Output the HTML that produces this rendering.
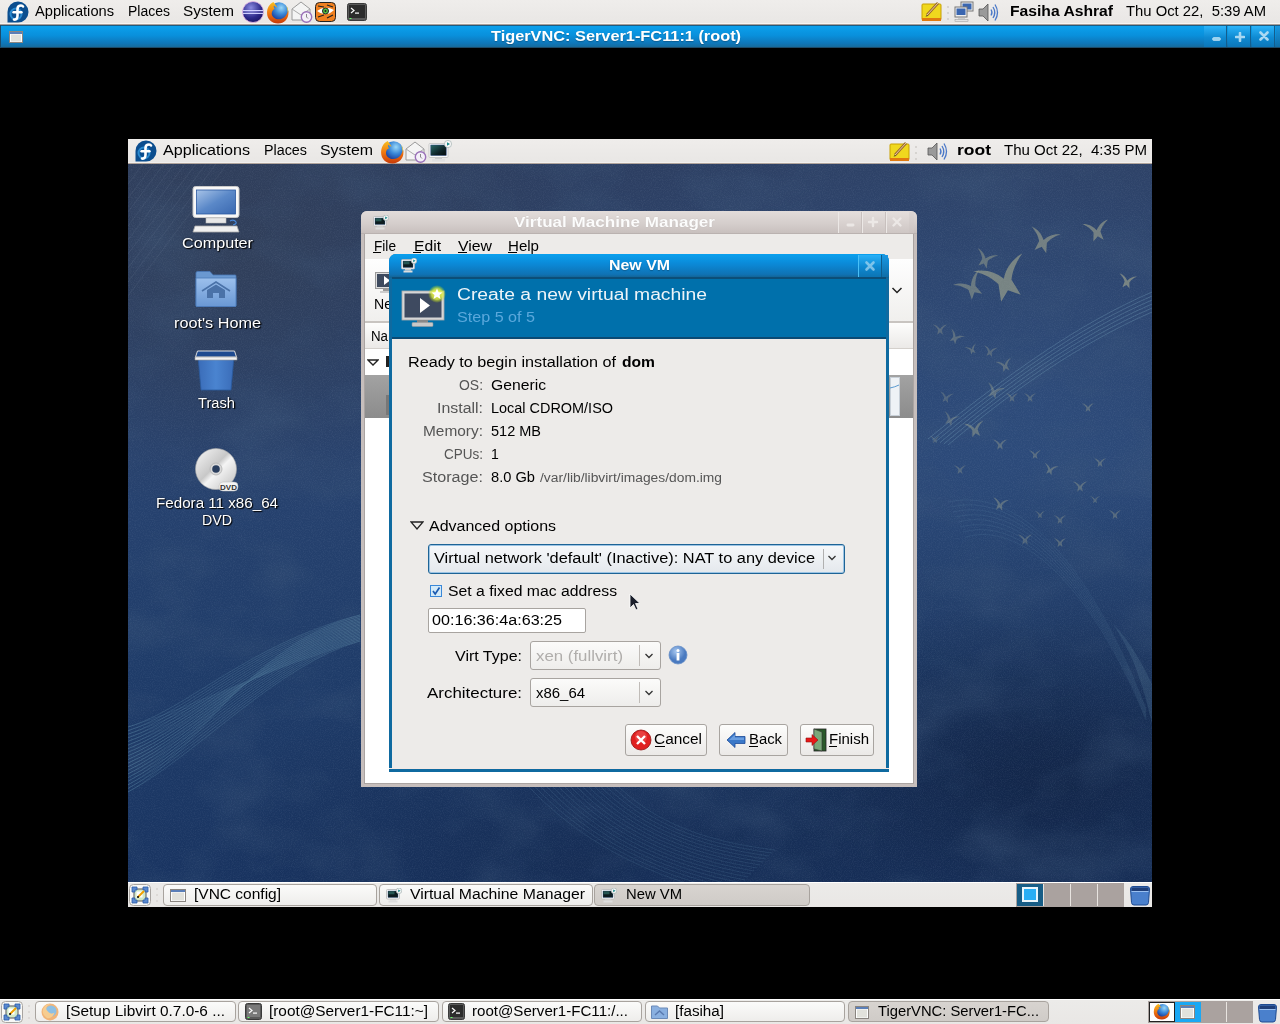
<!DOCTYPE html><html><head><meta charset="utf-8"><style>
html,body{margin:0;padding:0;width:1280px;height:1024px;overflow:hidden;background:#000}
body{position:relative;font-family:"Liberation Sans",sans-serif}
.t{position:absolute;white-space:pre;font-family:"Liberation Sans",sans-serif}
div,svg{box-sizing:border-box}
</style></head><body>
<div style="position:absolute;left:0px;top:0px;width:1280px;height:25px;background:linear-gradient(#efedeb,#e9e7e5 92%,#f6f4f2 92%,#f6f4f2 96%,#a89e98 96%)"></div>
<svg style="position:absolute;left:7px;top:1px;" width="22" height="22" viewBox="0 0 22 22"><g transform="scale(1.0)"><path d="M11 0.5 A10.5 10.5 0 1 1 0.5 11 L0.5 21.5 L11 21.5" fill="none"/>
<path d="M11 0.5a10.5 10.5 0 0 1 0 21H0.5V11A10.5 10.5 0 0 1 11 0.5z" fill="#0b4e8f"/>
<circle cx="9" cy="13" r="5.5" fill="none" stroke="#2a8ad0" stroke-width="2"/>
<path d="M7 18.5 C9.5 19 10.5 17 10.5 14.5 L10.5 8 C10.5 5.5 12 4.5 14 4.5 C15.5 4.5 16 5.5 16 5.5" fill="none" stroke="#fff" stroke-width="2.6" stroke-linecap="round"/>
<path d="M6.5 11.2 H14.5" stroke="#fff" stroke-width="2.4" stroke-linecap="round"/></g></svg>
<div class="t" style="left:35px;top:4px;font-size:14px;line-height:14px;transform:scaleX(1.0465);transform-origin:0 0;color:#000;">Applications</div>
<div class="t" style="left:128px;top:4px;font-size:14px;line-height:14px;transform:scaleX(0.9995);transform-origin:0 0;color:#000;">Places</div>
<div class="t" style="left:183px;top:4px;font-size:14px;line-height:14px;transform:scaleX(1.0927);transform-origin:0 0;color:#000;">System</div>
<svg style="position:absolute;left:242px;top:1px;" width="22" height="22" viewBox="0 0 22 22"><defs><radialGradient id="ecl" cx=".4" cy=".3" r=".8"><stop offset="0" stop-color="#8a8ae0"/><stop offset=".6" stop-color="#2c2a8a"/><stop offset="1" stop-color="#14105a"/></radialGradient></defs><circle cx="11" cy="11" r="10.5" fill="url(#ecl)" stroke="#e8b8e8" stroke-width=".8"/><rect x="1" y="9" width="20" height="1.2" fill="#cfd0ff"/><rect x="1" y="11.8" width="20" height="1.2" fill="#cfd0ff"/></svg>
<svg style="position:absolute;left:266px;top:1px;" width="23" height="23" viewBox="0 0 23 23"><g transform="scale(1.0454545454545454)"><defs><radialGradient id="ffg266" cx=".62" cy=".3" r=".7"><stop offset="0" stop-color="#9ad8f8"/><stop offset=".5" stop-color="#3a88d8"/><stop offset="1" stop-color="#1a3a98"/></radialGradient>
<linearGradient id="ffo266" x1="0" y1="0" x2="0" y2="1"><stop offset="0" stop-color="#f8c020"/><stop offset=".5" stop-color="#f07810"/><stop offset="1" stop-color="#c83a08"/></linearGradient></defs>
<circle cx="12.5" cy="10" r="8.8" fill="url(#ffg266)"/>
<path d="M7 1 C3 3 1 7 1 11.5 C1 17.5 5.5 21.5 11.5 21.5 C17.5 21.5 21.5 17 21.5 11.5 C21.5 10.5 21.3 9.5 21 8.5 C20.5 13 17.5 17.5 12 17.5 C8 17.5 5.2 14.5 5.5 11.5 C5.7 9.5 6.7 8.2 8.3 7.6 C7.5 6.6 7.2 5.5 7.6 4.4 C8.6 5.4 9.6 6 10.8 6.2 C9.8 4.6 8.6 2.8 7 1z" fill="url(#ffo266)"/>
<path d="M19.5 4.5 C21 6.5 21.5 9 21.2 11.5 C20.8 9.5 20.2 7.5 19.5 4.5z" fill="#f8d040"/></g></svg>
<svg style="position:absolute;left:291px;top:1px;" width="22" height="22" viewBox="0 0 22 22"><path d="M1 8 L10 1 L19 8 V19 H1z" fill="#f4f4f4" stroke="#9a9a9a"/><path d="M1 8 L10 14 L19 8" fill="none" stroke="#aaa"/><circle cx="15.5" cy="16" r="5.2" fill="#f4f0f8" stroke="#9a70b8" stroke-width="1.4"/><path d="M15.5 13 V16 L17 17.5" stroke="#888" fill="none"/></svg>
<svg style="position:absolute;left:315px;top:2px;" width="21" height="20" viewBox="0 0 21 20"><rect x="0.5" y="0.5" width="20" height="19" rx="4" fill="#f08020" stroke="#222"/><path d="M2 9 Q10 3 19 8 Q11 16 2 9z" fill="#fff"/><circle cx="10.5" cy="9" r="3" fill="#50c040" stroke="#222"/><circle cx="10.5" cy="9" r="1" fill="#222"/><path d="M3 4 L9 5 M12 3 L18 5 M3 15 L9 13 M12 16 L18 13" stroke="#222" stroke-width="1.2"/></svg>
<svg style="position:absolute;left:347px;top:3px;" width="20" height="18" viewBox="0 0 20 18"><rect x="0.5" y="0.5" width="19" height="17" rx="2" fill="#5a5a5a" stroke="#3a3a3a"/>
<rect x="2" y="2" width="16" height="13" fill="#2c2c2c"/><path d="M4 5 L7 7.5 L4 10" fill="none" stroke="#fff" stroke-width="1.2"/>
<rect x="8" y="9.5" width="4" height="1.2" fill="#fff"/><rect x="2.5" y="15" width="2" height="1" fill="#6f6"/></svg>
<svg style="position:absolute;left:921px;top:1px;" width="21" height="21" viewBox="0 0 21 21"><rect x="1" y="3" width="19" height="16" rx="1" fill="#f0d81e" stroke="#c8a000"/>
<rect x="1" y="17" width="19" height="3" fill="#e07a10"/><path d="M6 14 L17 2" stroke="#9a6a30" stroke-width="2.6"/><path d="M6 14 L17 2" stroke="#e8c8a0" stroke-width="1"/>
<path d="M4.5 15.5 L6 14 L7 15z" fill="#222"/></svg>
<div style="position:absolute;left:947px;top:6px;width:2px;height:2px;background:#cfccc8;border-radius:1px"></div>
<div style="position:absolute;left:947px;top:12px;width:2px;height:2px;background:#cfccc8;border-radius:1px"></div>
<div style="position:absolute;left:947px;top:18px;width:2px;height:2px;background:#cfccc8;border-radius:1px"></div>
<svg style="position:absolute;left:954px;top:1px;" width="22" height="21" viewBox="0 0 22 21"><rect x="7" y="1" width="12" height="9" fill="#f0f0f0" stroke="#777"/><rect x="8.5" y="2.5" width="9" height="6" fill="#3a66b0"/>
<rect x="1" y="6" width="12" height="10" fill="#f0f0f0" stroke="#777"/><rect x="2.5" y="7.5" width="9" height="6.5" fill="#3a66b0"/>
<rect x="4" y="17" width="7" height="1.5" fill="#ccc"/><rect x="1" y="18.5" width="13" height="2" fill="#e4e4e4" stroke="#999" stroke-width=".5"/></svg>
<svg style="position:absolute;left:978px;top:3px;" width="21" height="19" viewBox="0 0 21 19"><path d="M1 6 H5 L10 1 V18 L5 13 H1z" fill="#9a9a9a" stroke="#555" stroke-width=".8"/>
<path d="M13 6.5 Q15 9.5 13 12.5" fill="none" stroke="#4a78c8" stroke-width="1.3"/><path d="M15 4 Q18.5 9.5 15 15" fill="none" stroke="#4a78c8" stroke-width="1.3"/>
<path d="M17 1.5 Q22 9.5 17 17.5" fill="none" stroke="#4a78c8" stroke-width="1.3"/></svg>
<div class="t" style="left:1010px;top:4px;font-size:14px;line-height:14px;font-weight:bold;transform:scaleX(1.1188);transform-origin:0 0;color:#000;">Fasiha Ashraf</div>
<div class="t" style="left:1126px;top:4px;font-size:14px;line-height:14px;transform:scaleX(1.0584);transform-origin:0 0;color:#000;">Thu Oct 22,  5:39 AM</div>
<div style="position:absolute;left:0px;top:25px;width:1280px;height:23px;background:linear-gradient(#1d5a80 0,#1d5a80 4%,#0ba0ec 4%,#0990dc 45%,#0f76b8 80%,#166b9c 96%,#1d4a68 96%)"></div>
<div style="position:absolute;left:0px;top:25px;width:1px;height:23px;background:#1d4a68"></div>
<svg style="position:absolute;left:9px;top:31px;" width="14" height="12" viewBox="0 0 14 12"><rect x="0.5" y="0.5" width="13" height="11" fill="#fff" stroke="#8a8580"/>
<rect x="1" y="1" width="12" height="2" fill="#5b7fb8"/><rect x="2" y="3.5" width="10" height="7" fill="#e2e2dc"/></svg>
<div class="t" style="left:491px;top:29px;font-size:14px;line-height:14px;font-weight:bold;transform:scaleX(1.1658);transform-origin:0 0;color:#fff;text-shadow:0 1px 1px rgba(0,0,0,.25);">TigerVNC: Server1-FC11:1 (root)</div>
<div style="position:absolute;left:1204px;top:26px;width:23px;height:21px;background:linear-gradient(#2cb4fa,#0f8ad2 55%,#0c76b8);border-right:1px solid #145d8c"></div>
<div style="position:absolute;left:1228px;top:26px;width:23px;height:21px;background:linear-gradient(#2cb4fa,#0f8ad2 55%,#0c76b8);border-right:1px solid #145d8c"></div>
<div style="position:absolute;left:1252px;top:26px;width:23px;height:21px;background:linear-gradient(#2cb4fa,#0f8ad2 55%,#0c76b8);border-right:1px solid #145d8c"></div>
<svg style="position:absolute;left:1212px;top:37px;" width="9" height="4" viewBox="0 0 9 4"><rect x="0.5" y="0.5" width="8" height="3" rx="1.5" fill="#9ad4f0" stroke="#cfe8f8" stroke-width=".6"/></svg>
<svg style="position:absolute;left:1235px;top:32px;" width="10" height="10" viewBox="0 0 10 10"><path d="M5 1 V9 M1 5 H9" stroke="#a8d8f2" stroke-width="2.6" stroke-linecap="round"/></svg>
<svg style="position:absolute;left:1259px;top:31px;" width="10" height="10" viewBox="0 0 10 10"><path d="M1.5 1.5 L8.5 8.5 M8.5 1.5 L1.5 8.5" stroke="#a8d8f2" stroke-width="2.6" stroke-linecap="round"/></svg>
<div style="position:absolute;left:1276px;top:26px;width:4px;height:21px;background:linear-gradient(#1896e0,#0f6ea8)"></div>
<div style="position:absolute;left:128px;top:164px;width:1024px;height:718px;background:radial-gradient(ellipse 360px 260px at 110px 90px, rgba(52,62,82,.6), rgba(52,62,82,0)),radial-gradient(ellipse 480px 380px at 900px 240px, rgba(52,88,140,.4), rgba(52,88,140,0)),radial-gradient(ellipse 260px 140px at 900px 580px, rgba(10,25,55,.35), rgba(10,25,55,0)),radial-gradient(ellipse 420px 300px at 930px 620px, rgba(12,24,50,.4), rgba(12,24,50,0)),radial-gradient(ellipse 380px 200px at 450px 700px, rgba(12,24,50,.25), rgba(12,24,50,0)),linear-gradient(180deg,#2d3f62 0%,#284370 40%,#1f3c69 70%,#193461 100%)"></div>
<svg style="position:absolute;left:128px;top:164px;" width="1024" height="718" viewBox="0 0 1024 718"><defs><filter id="grain" x="0" y="0" width="100%" height="100%"><feTurbulence type="fractalNoise" baseFrequency=".9" numOctaves="2" seed="3"/><feColorMatrix values="0 0 0 0 .55  0 0 0 0 .65  0 0 0 0 .8  0 0 0 -1.6 .95"/></filter><filter id="blot" x="0" y="0" width="100%" height="100%"><feTurbulence type="fractalNoise" baseFrequency=".012 .018" numOctaves="3" seed="11"/><feColorMatrix values="0 0 0 0 .05  0 0 0 0 .1  0 0 0 0 .2  0 0 0 -2.2 1.25"/></filter></defs><rect width="1024" height="718" filter="url(#blot)" opacity=".35"/><rect width="1024" height="718" filter="url(#grain)" opacity=".1"/></svg>
<svg style="position:absolute;left:128px;top:164px;" width="1024" height="718" viewBox="0 0 1024 718"><defs><filter id="bblur"><feGaussianBlur stdDeviation=".5"/></filter></defs><g stroke="#8090a8" stroke-width=".6" opacity=".22" fill="none"><path d="M0 20 L15 0"/><path d="M0 34 L26 0"/><path d="M0 48 L36 0"/><path d="M0 62 L46 0"/><path d="M0 76 L57 0"/><path d="M0 90 L68 0"/><path d="M0 104 L78 0"/><path d="M0 118 L88 0"/><path d="M0 132 L99 0"/></g><g fill="none" stroke="#7fb4c8" stroke-width=".55" opacity=".36"><path d="M0.0 563.0 C60.0 545.0 120.0 480.0 232.0 451.0"/><path d="M0.0 566.6 C60.6 547.5 121.7 481.1 232.0 452.4"/><path d="M0.0 570.2 C61.1 550.0 123.3 482.2 232.0 453.9"/><path d="M0.0 573.8 C61.7 552.5 125.0 483.3 232.0 455.3"/><path d="M0.0 577.4 C62.2 555.0 126.7 484.4 232.0 456.8"/><path d="M0.0 581.1 C62.8 557.5 128.3 485.6 232.0 458.2"/><path d="M0.0 584.7 C63.3 560.0 130.0 486.7 232.0 459.7"/><path d="M0.0 588.3 C63.9 562.5 131.7 487.8 232.0 461.1"/><path d="M0.0 591.9 C64.4 565.0 133.3 488.9 232.0 462.6"/><path d="M0.0 595.5 C65.0 567.5 135.0 490.0 232.0 464.0"/><path d="M0.0 599.1 C65.6 570.0 136.7 491.1 232.0 465.4"/><path d="M0.0 602.7 C66.1 572.5 138.3 492.2 232.0 466.9"/><path d="M0.0 606.3 C66.7 575.0 140.0 493.3 232.0 468.3"/><path d="M0.0 609.9 C67.2 577.5 141.7 494.4 232.0 469.8"/><path d="M0.0 613.6 C67.8 580.0 143.3 495.6 232.0 471.2"/><path d="M0.0 617.2 C68.3 582.5 145.0 496.7 232.0 472.7"/><path d="M0.0 620.8 C68.9 585.0 146.7 497.8 232.0 474.1"/><path d="M0.0 624.4 C69.4 587.5 148.3 498.9 232.0 475.6"/><path d="M0.0 628.0 C70.0 590.0 150.0 500.0 232.0 477.0"/></g><g fill="none" stroke="#7fb4c8" stroke-width=".5" opacity=".25"><path d="M0.0 628.0 C70.0 590.0 120.0 480.0 232.0 451.0"/><path d="M0.0 624.4 C69.4 587.5 121.7 481.1 232.0 452.4"/><path d="M0.0 620.8 C68.9 585.0 123.3 482.2 232.0 453.9"/><path d="M0.0 617.2 C68.3 582.5 125.0 483.3 232.0 455.3"/><path d="M0.0 613.6 C67.8 580.0 126.7 484.4 232.0 456.8"/><path d="M0.0 609.9 C67.2 577.5 128.3 485.6 232.0 458.2"/><path d="M0.0 606.3 C66.7 575.0 130.0 486.7 232.0 459.7"/><path d="M0.0 602.7 C66.1 572.5 131.7 487.8 232.0 461.1"/><path d="M0.0 599.1 C65.6 570.0 133.3 488.9 232.0 462.6"/><path d="M0.0 595.5 C65.0 567.5 135.0 490.0 232.0 464.0"/><path d="M0.0 591.9 C64.4 565.0 136.7 491.1 232.0 465.4"/><path d="M0.0 588.3 C63.9 562.5 138.3 492.2 232.0 466.9"/><path d="M0.0 584.7 C63.3 560.0 140.0 493.3 232.0 468.3"/><path d="M0.0 581.1 C62.8 557.5 141.7 494.4 232.0 469.8"/><path d="M0.0 577.4 C62.2 555.0 143.3 495.6 232.0 471.2"/><path d="M0.0 573.8 C61.7 552.5 145.0 496.7 232.0 472.7"/><path d="M0.0 570.2 C61.1 550.0 146.7 497.8 232.0 474.1"/><path d="M0.0 566.6 C60.6 547.5 148.3 498.9 232.0 475.6"/><path d="M0.0 563.0 C60.0 545.0 150.0 500.0 232.0 477.0"/></g><g fill="none" stroke="#6a9ab8" stroke-width=".5" opacity=".32"><path d="M342 536 C387 631 472 702 602 731"/><path d="M348 536 C393 631 476 700 605 728"/><path d="M354 536 C399 631 480 698 608 725"/><path d="M360 536 C405 631 484 696 611 722"/><path d="M366 536 C411 631 488 694 614 719"/><path d="M372 536 C417 631 492 692 617 716"/><path d="M378 536 C423 631 496 690 620 713"/><path d="M384 536 C429 631 500 688 623 710"/><path d="M390 536 C435 631 504 686 626 707"/><path d="M396 536 C441 631 508 684 629 704"/><path d="M402 536 C447 631 512 682 632 701"/><path d="M408 536 C453 631 516 680 635 698"/><path d="M414 536 C459 631 520 678 638 695"/><path d="M420 536 C465 631 524 676 641 692"/><path d="M426 536 C471 631 528 674 644 689"/><path d="M432 536 C477 631 532 672 647 686"/></g><g fill="none" stroke="#8ab8cc" stroke-width=".6" opacity=".45"><path d="M800 275.0 C880 210 950 160 1024 128"/><path d="M804 276.2 C880 214 950 164 1024 132"/><path d="M808 277.4 C880 218 950 168 1024 136"/><path d="M812 278.6 C880 222 950 172 1024 140"/><path d="M816 279.8 C880 226 950 176 1024 144"/><path d="M820 281.0 C880 230 950 180 1024 148"/></g><g fill="none" stroke="#7aa8c0" stroke-width=".5" opacity=".22"><path d="M820.0 338 C900 320 970 420.0 1018 545.0"/><path d="M822.5 343 C900 325 970 422.5 1018 546.5"/><path d="M825.0 348 C900 330 970 425.0 1018 548.0"/><path d="M827.5 353 C900 335 970 427.5 1018 549.5"/><path d="M830.0 358 C900 340 970 430.0 1018 551.0"/><path d="M832.5 363 C900 345 970 432.5 1018 552.5"/><path d="M835.0 368 C900 350 970 435.0 1018 554.0"/><path d="M837.5 373 C900 355 970 437.5 1018 555.5"/></g><path d="M985 460 C1005 490 1015 520 1024 560 L1024 520 C1012 495 1000 475 985 460z" fill="#6a90a8" opacity=".2"/><g fill="#a8ac90" filter="url(#bblur)"><path d="M15 13 C12 8 7 4 0 3 C6 7 9 11 11 15 L9 25 L15 20 L21 25 L19 15 C21 11 24 7 30 3 C23 4 18 8 15 13z" opacity="0.60" transform="translate(851.0 92.0) rotate(-20 26.0 26.0) scale(1.733)"/><path d="M15 13 C12 8 7 4 0 3 C6 7 9 11 11 15 L9 25 L15 20 L21 25 L19 15 C21 11 24 7 30 3 C23 4 18 8 15 13z" opacity="0.56" transform="translate(900.0 63.0) rotate(15 15.0 15.0) scale(1.000)"/><path d="M15 13 C12 8 7 4 0 3 C6 7 9 11 11 15 L9 25 L15 20 L21 25 L19 15 C21 11 24 7 30 3 C23 4 18 8 15 13z" opacity="0.56" transform="translate(956.0 55.0) rotate(-10 13.0 13.0) scale(0.867)"/><path d="M15 13 C12 8 7 4 0 3 C6 7 9 11 11 15 L9 25 L15 20 L21 25 L19 15 C21 11 24 7 30 3 C23 4 18 8 15 13z" opacity="0.60" transform="translate(990.0 109.0) rotate(10 9.0 9.0) scale(0.600)"/><path d="M15 13 C12 8 7 4 0 3 C6 7 9 11 11 15 L9 25 L15 20 L21 25 L19 15 C21 11 24 7 30 3 C23 4 18 8 15 13z" opacity="0.48" transform="translate(829.0 109.0) rotate(-30 15.0 15.0) scale(1.000)"/><path d="M15 13 C12 8 7 4 0 3 C6 7 9 11 11 15 L9 25 L15 20 L21 25 L19 15 C21 11 24 7 30 3 C23 4 18 8 15 13z" opacity="0.44" transform="translate(846.0 85.0) rotate(20 11.0 11.0) scale(0.733)"/><path d="M15 13 C12 8 7 4 0 3 C6 7 9 11 11 15 L9 25 L15 20 L21 25 L19 15 C21 11 24 7 30 3 C23 4 18 8 15 13z" opacity="0.32" transform="translate(805.0 159.0) rotate(0 7.0 7.0) scale(0.467)"/><path d="M15 13 C12 8 7 4 0 3 C6 7 9 11 11 15 L9 25 L15 20 L21 25 L19 15 C21 11 24 7 30 3 C23 4 18 8 15 13z" opacity="0.36" transform="translate(819.0 166.0) rotate(30 8.0 8.0) scale(0.533)"/><path d="M15 13 C12 8 7 4 0 3 C6 7 9 11 11 15 L9 25 L15 20 L21 25 L19 15 C21 11 24 7 30 3 C23 4 18 8 15 13z" opacity="0.36" transform="translate(838.0 180.0) rotate(-20 6.0 6.0) scale(0.400)"/><path d="M15 13 C12 8 7 4 0 3 C6 7 9 11 11 15 L9 25 L15 20 L21 25 L19 15 C21 11 24 7 30 3 C23 4 18 8 15 13z" opacity="0.32" transform="translate(855.0 181.0) rotate(10 7.0 7.0) scale(0.467)"/><path d="M15 13 C12 8 7 4 0 3 C6 7 9 11 11 15 L9 25 L15 20 L21 25 L19 15 C21 11 24 7 30 3 C23 4 18 8 15 13z" opacity="0.36" transform="translate(869.0 194.0) rotate(-15 8.0 8.0) scale(0.533)"/><path d="M15 13 C12 8 7 4 0 3 C6 7 9 11 11 15 L9 25 L15 20 L21 25 L19 15 C21 11 24 7 30 3 C23 4 18 8 15 13z" opacity="0.36" transform="translate(857.0 219.0) rotate(20 9.0 9.0) scale(0.600)"/><path d="M15 13 C12 8 7 4 0 3 C6 7 9 11 11 15 L9 25 L15 20 L21 25 L19 15 C21 11 24 7 30 3 C23 4 18 8 15 13z" opacity="0.32" transform="translate(878.0 228.0) rotate(0 6.0 6.0) scale(0.400)"/><path d="M15 13 C12 8 7 4 0 3 C6 7 9 11 11 15 L9 25 L15 20 L21 25 L19 15 C21 11 24 7 30 3 C23 4 18 8 15 13z" opacity="0.28" transform="translate(811.0 227.0) rotate(10 7.0 7.0) scale(0.467)"/><path d="M15 13 C12 8 7 4 0 3 C6 7 9 11 11 15 L9 25 L15 20 L21 25 L19 15 C21 11 24 7 30 3 C23 4 18 8 15 13z" opacity="0.32" transform="translate(896.0 228.0) rotate(0 6.0 6.0) scale(0.400)"/><path d="M15 13 C12 8 7 4 0 3 C6 7 9 11 11 15 L9 25 L15 20 L21 25 L19 15 C21 11 24 7 30 3 C23 4 18 8 15 13z" opacity="0.36" transform="translate(954.0 238.0) rotate(0 6.0 6.0) scale(0.400)"/><path d="M15 13 C12 8 7 4 0 3 C6 7 9 11 11 15 L9 25 L15 20 L21 25 L19 15 C21 11 24 7 30 3 C23 4 18 8 15 13z" opacity="0.32" transform="translate(814.0 248.0) rotate(20 8.0 8.0) scale(0.533)"/><path d="M15 13 C12 8 7 4 0 3 C6 7 9 11 11 15 L9 25 L15 20 L21 25 L19 15 C21 11 24 7 30 3 C23 4 18 8 15 13z" opacity="0.44" transform="translate(837.0 256.0) rotate(-10 10.0 10.0) scale(0.667)"/><path d="M15 13 C12 8 7 4 0 3 C6 7 9 11 11 15 L9 25 L15 20 L21 25 L19 15 C21 11 24 7 30 3 C23 4 18 8 15 13z" opacity="0.36" transform="translate(865.0 274.0) rotate(0 7.0 7.0) scale(0.467)"/><path d="M15 13 C12 8 7 4 0 3 C6 7 9 11 11 15 L9 25 L15 20 L21 25 L19 15 C21 11 24 7 30 3 C23 4 18 8 15 13z" opacity="0.36" transform="translate(901.0 285.0) rotate(0 6.0 6.0) scale(0.400)"/><path d="M15 13 C12 8 7 4 0 3 C6 7 9 11 11 15 L9 25 L15 20 L21 25 L19 15 C21 11 24 7 30 3 C23 4 18 8 15 13z" opacity="0.40" transform="translate(915.0 299.0) rotate(15 7.0 7.0) scale(0.467)"/><path d="M15 13 C12 8 7 4 0 3 C6 7 9 11 11 15 L9 25 L15 20 L21 25 L19 15 C21 11 24 7 30 3 C23 4 18 8 15 13z" opacity="0.36" transform="translate(945.0 316.0) rotate(0 7.0 7.0) scale(0.467)"/><path d="M15 13 C12 8 7 4 0 3 C6 7 9 11 11 15 L9 25 L15 20 L21 25 L19 15 C21 11 24 7 30 3 C23 4 18 8 15 13z" opacity="0.36" transform="translate(966.0 293.0) rotate(0 6.0 6.0) scale(0.400)"/><path d="M15 13 C12 8 7 4 0 3 C6 7 9 11 11 15 L9 25 L15 20 L21 25 L19 15 C21 11 24 7 30 3 C23 4 18 8 15 13z" opacity="0.32" transform="translate(926.0 350.0) rotate(0 6.0 6.0) scale(0.400)"/><path d="M15 13 C12 8 7 4 0 3 C6 7 9 11 11 15 L9 25 L15 20 L21 25 L19 15 C21 11 24 7 30 3 C23 4 18 8 15 13z" opacity="0.32" transform="translate(890.0 369.0) rotate(0 7.0 7.0) scale(0.467)"/><path d="M15 13 C12 8 7 4 0 3 C6 7 9 11 11 15 L9 25 L15 20 L21 25 L19 15 C21 11 24 7 30 3 C23 4 18 8 15 13z" opacity="0.36" transform="translate(926.0 373.0) rotate(0 6.0 6.0) scale(0.400)"/><path d="M15 13 C12 8 7 4 0 3 C6 7 9 11 11 15 L9 25 L15 20 L21 25 L19 15 C21 11 24 7 30 3 C23 4 18 8 15 13z" opacity="0.40" transform="translate(864.0 333.0) rotate(10 8.0 8.0) scale(0.533)"/><path d="M15 13 C12 8 7 4 0 3 C6 7 9 11 11 15 L9 25 L15 20 L21 25 L19 15 C21 11 24 7 30 3 C23 4 18 8 15 13z" opacity="0.32" transform="translate(826.0 300.0) rotate(0 6.0 6.0) scale(0.400)"/><path d="M15 13 C12 8 7 4 0 3 C6 7 9 11 11 15 L9 25 L15 20 L21 25 L19 15 C21 11 24 7 30 3 C23 4 18 8 15 13z" opacity="0.32" transform="translate(907.0 346.0) rotate(0 5.0 5.0) scale(0.333)"/><path d="M15 13 C12 8 7 4 0 3 C6 7 9 11 11 15 L9 25 L15 20 L21 25 L19 15 C21 11 24 7 30 3 C23 4 18 8 15 13z" opacity="0.36" transform="translate(981.0 345.0) rotate(0 6.0 6.0) scale(0.400)"/><path d="M15 13 C12 8 7 4 0 3 C6 7 9 11 11 15 L9 25 L15 20 L21 25 L19 15 C21 11 24 7 30 3 C23 4 18 8 15 13z" opacity="0.32" transform="translate(962.0 331.0) rotate(0 5.0 5.0) scale(0.333)"/><path d="M15 13 C12 8 7 4 0 3 C6 7 9 11 11 15 L9 25 L15 20 L21 25 L19 15 C21 11 24 7 30 3 C23 4 18 8 15 13z" opacity="0.28" transform="translate(802.0 271.0) rotate(0 5.0 5.0) scale(0.333)"/></g></svg>
<div style="position:absolute;left:128px;top:139px;width:1024px;height:25px;background:linear-gradient(#efedeb,#e9e7e5 92%,#f2f0ee 92%,#f2f0ee 96%,#b0a49c 96%)"></div>
<svg style="position:absolute;left:135px;top:140px;" width="22" height="22" viewBox="0 0 22 22"><g transform="scale(1.0)"><path d="M11 0.5 A10.5 10.5 0 1 1 0.5 11 L0.5 21.5 L11 21.5" fill="none"/>
<path d="M11 0.5a10.5 10.5 0 0 1 0 21H0.5V11A10.5 10.5 0 0 1 11 0.5z" fill="#0b4e8f"/>
<circle cx="9" cy="13" r="5.5" fill="none" stroke="#2a8ad0" stroke-width="2"/>
<path d="M7 18.5 C9.5 19 10.5 17 10.5 14.5 L10.5 8 C10.5 5.5 12 4.5 14 4.5 C15.5 4.5 16 5.5 16 5.5" fill="none" stroke="#fff" stroke-width="2.6" stroke-linecap="round"/>
<path d="M6.5 11.2 H14.5" stroke="#fff" stroke-width="2.4" stroke-linecap="round"/></g></svg>
<div class="t" style="left:163px;top:143px;font-size:14px;line-height:14px;transform:scaleX(1.1525);transform-origin:0 0;color:#000;">Applications</div>
<div class="t" style="left:264px;top:143px;font-size:14px;line-height:14px;transform:scaleX(1.0233);transform-origin:0 0;color:#000;">Places</div>
<div class="t" style="left:320px;top:143px;font-size:14px;line-height:14px;transform:scaleX(1.1355);transform-origin:0 0;color:#000;">System</div>
<svg style="position:absolute;left:380px;top:140px;" width="24" height="24" viewBox="0 0 24 24"><g transform="scale(1.0909090909090908)"><defs><radialGradient id="ffg380" cx=".62" cy=".3" r=".7"><stop offset="0" stop-color="#9ad8f8"/><stop offset=".5" stop-color="#3a88d8"/><stop offset="1" stop-color="#1a3a98"/></radialGradient>
<linearGradient id="ffo380" x1="0" y1="0" x2="0" y2="1"><stop offset="0" stop-color="#f8c020"/><stop offset=".5" stop-color="#f07810"/><stop offset="1" stop-color="#c83a08"/></linearGradient></defs>
<circle cx="12.5" cy="10" r="8.8" fill="url(#ffg380)"/>
<path d="M7 1 C3 3 1 7 1 11.5 C1 17.5 5.5 21.5 11.5 21.5 C17.5 21.5 21.5 17 21.5 11.5 C21.5 10.5 21.3 9.5 21 8.5 C20.5 13 17.5 17.5 12 17.5 C8 17.5 5.2 14.5 5.5 11.5 C5.7 9.5 6.7 8.2 8.3 7.6 C7.5 6.6 7.2 5.5 7.6 4.4 C8.6 5.4 9.6 6 10.8 6.2 C9.8 4.6 8.6 2.8 7 1z" fill="url(#ffo380)"/>
<path d="M19.5 4.5 C21 6.5 21.5 9 21.2 11.5 C20.8 9.5 20.2 7.5 19.5 4.5z" fill="#f8d040"/></g></svg>
<svg style="position:absolute;left:405px;top:141px;" width="22" height="22" viewBox="0 0 22 22"><path d="M1 8 L10 1 L19 8 V19 H1z" fill="#f4f4f4" stroke="#9a9a9a"/><path d="M1 8 L10 14 L19 8" fill="none" stroke="#aaa"/><circle cx="15.5" cy="16" r="5.2" fill="#f4f0f8" stroke="#9a70b8" stroke-width="1.4"/><path d="M15.5 13 V16 L17 17.5" stroke="#888" fill="none"/></svg>
<svg style="position:absolute;left:428px;top:140px;" width="24" height="22" viewBox="0 0 24 22"><defs><linearGradient id="vmsc" x1="0" y1="0" x2="1" y2="1"><stop offset="0" stop-color="#2a6a68"/><stop offset=".6" stop-color="#0e2428"/><stop offset="1" stop-color="#050a0c"/></linearGradient></defs><rect x="1" y="3.5" width="19" height="14" rx="1" fill="#fbfbfb" stroke="#c0c0c0" stroke-width=".8"/><rect x="2.8" y="5" width="15.4" height="10.5" fill="url(#vmsc)" stroke="#2a4a80" stroke-width=".5"/><rect x="7" y="17" width="7" height="2" fill="#ccc"/><rect x="4" y="19" width="13" height="2.5" fill="#e0e0e0"/><circle cx="20" cy="4" r="3.6" fill="#f6f6f6" stroke="#9aa" stroke-width=".6"/><path d="M19 2.2 L22 4 L19 5.8z" fill="#1a8a8a"/></svg>
<svg style="position:absolute;left:889px;top:141px;" width="21" height="21" viewBox="0 0 21 21"><rect x="1" y="3" width="19" height="16" rx="1" fill="#f0d81e" stroke="#c8a000"/>
<rect x="1" y="17" width="19" height="3" fill="#e07a10"/><path d="M6 14 L17 2" stroke="#9a6a30" stroke-width="2.6"/><path d="M6 14 L17 2" stroke="#e8c8a0" stroke-width="1"/>
<path d="M4.5 15.5 L6 14 L7 15z" fill="#222"/></svg>
<div style="position:absolute;left:915px;top:146px;width:2px;height:2px;background:#cfccc8;border-radius:1px"></div>
<div style="position:absolute;left:915px;top:152px;width:2px;height:2px;background:#cfccc8;border-radius:1px"></div>
<div style="position:absolute;left:915px;top:158px;width:2px;height:2px;background:#cfccc8;border-radius:1px"></div>
<svg style="position:absolute;left:927px;top:142px;" width="21" height="19" viewBox="0 0 21 19"><path d="M1 6 H5 L10 1 V18 L5 13 H1z" fill="#9a9a9a" stroke="#555" stroke-width=".8"/>
<path d="M13 6.5 Q15 9.5 13 12.5" fill="none" stroke="#4a78c8" stroke-width="1.3"/><path d="M15 4 Q18.5 9.5 15 15" fill="none" stroke="#4a78c8" stroke-width="1.3"/>
<path d="M17 1.5 Q22 9.5 17 17.5" fill="none" stroke="#4a78c8" stroke-width="1.3"/></svg>
<div class="t" style="left:957px;top:143px;font-size:14px;line-height:14px;font-weight:bold;transform:scaleX(1.2494);transform-origin:0 0;color:#000;">root</div>
<div class="t" style="left:1004px;top:143px;font-size:14px;line-height:14px;transform:scaleX(1.0748);transform-origin:0 0;color:#000;">Thu Oct 22,  4:35 PM</div>
<div style="position:absolute;left:128px;top:882px;width:1024px;height:25px;background:linear-gradient(#ffffff 0,#ffffff 4%,#ecebe9 4%,#e9e7e5)"></div>
<svg style="position:absolute;left:129px;top:884px;" width="22" height="22" viewBox="0 0 22 22"><rect x="0.5" y="0.5" width="21" height="21" rx="4" fill="#f8f8f6" stroke="#a8a4a0"/>
<rect x="5" y="5" width="12" height="12" fill="#d0e8c8" stroke="#707070" stroke-width="1.2"/><rect x="7.5" y="7.5" width="6" height="6" fill="#fff"/>
<path d="M3 3h5v3h-2v2h-3z M19 3h-5v3h2v2h3z M3 19h5v-3h-2v-2h-3z M19 19h-5v-3h2v-2h3z" fill="#5b8ad0" stroke="#2a5aa8" stroke-width=".8"/>
<path d="M9 13 L15 7" stroke="#f0a000" stroke-width="2"/><circle cx="9" cy="13" r="1" fill="#000"/></svg>
<div style="position:absolute;left:156px;top:888px;width:2px;height:2px;background:#d8d5d2;border-radius:1px"></div>
<div style="position:absolute;left:156px;top:894px;width:2px;height:2px;background:#d8d5d2;border-radius:1px"></div>
<div style="position:absolute;left:156px;top:900px;width:2px;height:2px;background:#d8d5d2;border-radius:1px"></div>
<div style="position:absolute;left:163px;top:884px;width:214px;height:22px;background:linear-gradient(#fbfbfa,#eeedeb);border:1px solid #a8a39e;border-radius:4px"></div>
<svg style="position:absolute;left:170px;top:889px;" width="16" height="13" viewBox="0 0 16 13"><rect x="0.5" y="0.5" width="15" height="12" fill="#fff" stroke="#8a8580"/>
<rect x="1" y="1" width="14" height="2" fill="#5b7fb8"/><rect x="2" y="3.5" width="12" height="8" fill="#e2e2dc"/></svg>
<div class="t" style="left:194px;top:887px;font-size:14px;line-height:14px;transform:scaleX(1.1071);transform-origin:0 0;color:#000;">[VNC config]</div>
<div style="position:absolute;left:379px;top:884px;width:214px;height:22px;background:linear-gradient(#fbfbfa,#eeedeb);border:1px solid #a8a39e;border-radius:4px"></div>
<svg style="position:absolute;left:386px;top:888px;" width="16" height="15" viewBox="0 0 16 15"><rect x="0.5" y="1.5" width="13" height="9.5" rx="1" fill="#fafafa" stroke="#b8b8b8" stroke-width=".8"/>
<rect x="2" y="3" width="10" height="6.5" fill="#0c1c20" stroke="#3a5a8a" stroke-width=".4"/><rect x="2.5" y="3.3" width="6" height="3" fill="#2f6a64" opacity=".75"/>
<rect x="4" y="11" width="6" height="1.5" fill="#cfcfcf"/><rect x="2.5" y="12.5" width="9" height="2" fill="#dedede"/>
<circle cx="13" cy="2.8" r="2.8" fill="#f4f4f4" stroke="#9aa" stroke-width=".6"/><path d="M12.2 1.4 L14.6 2.8 L12.2 4.2z" fill="#1a8a8a"/></svg>
<div class="t" style="left:410px;top:887px;font-size:14px;line-height:14px;transform:scaleX(1.1263);transform-origin:0 0;color:#000;">Virtual Machine Manager</div>
<div style="position:absolute;left:594px;top:884px;width:216px;height:22px;background:linear-gradient(#d8d4d0,#cfcbc7);border:1px solid #a8a39e;border-radius:4px"></div>
<svg style="position:absolute;left:601px;top:888px;" width="16" height="15" viewBox="0 0 16 15"><rect x="0.5" y="1.5" width="13" height="9.5" rx="1" fill="#fafafa" stroke="#b8b8b8" stroke-width=".8"/>
<rect x="2" y="3" width="10" height="6.5" fill="#0c1c20" stroke="#3a5a8a" stroke-width=".4"/><rect x="2.5" y="3.3" width="6" height="3" fill="#2f6a64" opacity=".75"/>
<rect x="4" y="11" width="6" height="1.5" fill="#cfcfcf"/><rect x="2.5" y="12.5" width="9" height="2" fill="#dedede"/>
<circle cx="13" cy="2.8" r="2.8" fill="#f4f4f4" stroke="#9aa" stroke-width=".6"/><path d="M12.2 1.4 L14.6 2.8 L12.2 4.2z" fill="#1a8a8a"/></svg>
<div class="t" style="left:626px;top:887px;font-size:14px;line-height:14px;transform:scaleX(1.0587);transform-origin:0 0;color:#000;">New VM</div>
<div style="position:absolute;left:1016px;top:883px;width:108px;height:24px;background:#aaa29f"></div>
<div style="position:absolute;left:1017px;top:884px;width:26px;height:22px;background:#175d86"></div>
<div style="position:absolute;left:1022px;top:887px;width:16px;height:15px;background:#2aaef4;border:2px solid #eaf6fc"></div>
<div style="position:absolute;left:1043px;top:884px;width:1px;height:22px;background:#e8e4e0"></div>
<div style="position:absolute;left:1070px;top:884px;width:1px;height:22px;background:#e8e4e0"></div>
<div style="position:absolute;left:1097px;top:884px;width:1px;height:22px;background:#e8e4e0"></div>
<svg style="position:absolute;left:1129px;top:885px;" width="22" height="21" viewBox="0 0 22 21"><path d="M1.5 4 Q1.5 1.5 4 1.5 H18 Q20.5 1.5 20.5 4 L19.5 17.5 Q19.3 20 17 20 H5 Q2.7 20 2.5 17.5z" fill="#4a80cc" stroke="#1e4a90"/><path d="M2.5 3.5 Q2.5 2.5 4 2.5 H18 Q19.5 2.5 19.5 3.5 V6 H2.5z" fill="#1e3e78"/><rect x="2.5" y="6" width="17" height="1" fill="#9ac0f0"/></svg>
<svg style="position:absolute;left:192px;top:186px;" width="48" height="47" viewBox="0 0 48 47"><defs><linearGradient id="scr" x1="0" y1="0" x2="1" y2="1"><stop offset="0" stop-color="#a8c4e8"/><stop offset=".5" stop-color="#5a88c8"/><stop offset="1" stop-color="#3a68b0"/></linearGradient></defs><rect x="1" y="0.5" width="46" height="31" rx="2.5" fill="#f8f8f8" stroke="#c8c8c8"/><rect x="4.5" y="4" width="39" height="24" fill="url(#scr)" stroke="#2a58a0" stroke-width=".8"/><rect x="14" y="32" width="20" height="5" fill="#e8e8e8" stroke="#bbb" stroke-width=".6"/><path d="M3 40 H45 L47 46 H1z" fill="#f0f0f0" stroke="#aaa" stroke-width=".8"/><path d="M38 35 q4 -2 6 1 q1 2 -3 3" fill="none" stroke="#4a88d8" stroke-width="1.2"/></svg>
<div class="t" style="left:182px;top:236px;font-size:14px;line-height:14px;transform:scaleX(1.1551);transform-origin:0 0;color:#fff;text-shadow:1px 1px 1px #000,0 0 2px rgba(0,0,0,.6);">Computer</div>
<svg style="position:absolute;left:195px;top:271px;" width="42" height="36" viewBox="0 0 42 36"><defs><linearGradient id="fld" x1="0" y1="0" x2="0" y2="1"><stop offset="0" stop-color="#9cc0ec"/><stop offset="1" stop-color="#6a98d4"/></linearGradient></defs><path d="M1 2 Q1 0.5 2.5 0.5 H15 L18 4 H40 Q41 4 41 5 V34.5 Q41 35.5 40 35.5 H2 Q1 35.5 1 34.5z" fill="#6a98d0" stroke="#4a78b8" stroke-width=".8"/><path d="M1 7 H41 V34.5 Q41 35.5 40 35.5 H2 Q1 35.5 1 34.5z" fill="url(#fld)" stroke="#4a78b8" stroke-width=".8"/><path d="M7 20 L21 11 L35 20" fill="none" stroke="#4a72a8" stroke-width="1.6"/><path d="M12 19 L21 13.5 L30 19 V27 H24 V22 H18 V27 H12z" fill="#4a72a8"/></svg>
<div class="t" style="left:174px;top:316px;font-size:14px;line-height:14px;transform:scaleX(1.1596);transform-origin:0 0;color:#fff;text-shadow:1px 1px 1px #000,0 0 2px rgba(0,0,0,.6);">root&#x27;s Home</div>
<svg style="position:absolute;left:194px;top:350px;" width="44" height="41" viewBox="0 0 44 41"><defs><linearGradient id="trs" x1="0" y1="0" x2="1" y2="0"><stop offset="0" stop-color="#3a6cb8"/><stop offset=".5" stop-color="#4a84d0"/><stop offset="1" stop-color="#3a6cb8"/></linearGradient></defs><path d="M4 6 L7 40 H37 L40 6z" fill="url(#trs)" stroke="#2a5aa0" stroke-width=".8"/><path d="M3.5 1 H40.5 L42.5 7 H1.5z" fill="#1e4a90" stroke="#ddd" stroke-width="1"/><path d="M1 7 H43 V10 H1z" fill="#f2f2f2" stroke="#999" stroke-width=".6"/></svg>
<div class="t" style="left:198px;top:396px;font-size:14px;line-height:14px;transform:scaleX(1.0492);transform-origin:0 0;color:#fff;text-shadow:1px 1px 1px #000,0 0 2px rgba(0,0,0,.6);">Trash</div>
<svg style="position:absolute;left:195px;top:448px;" width="44" height="44" viewBox="0 0 44 44"><defs><linearGradient id="dvd" x1="0" y1="0" x2="1" y2="1"><stop offset="0" stop-color="#f8f8f8"/><stop offset=".45" stop-color="#c8c8c8"/><stop offset=".55" stop-color="#f4f4f4"/><stop offset="1" stop-color="#bcbcbc"/></linearGradient></defs><circle cx="21" cy="21" r="20.5" fill="url(#dvd)" stroke="#aaa" stroke-width=".6"/><circle cx="21" cy="21" r="6" fill="#d8d8d8" stroke="#bbb"/><circle cx="21" cy="21" r="3.8" fill="#2a3e5e"/><rect x="24" y="34" width="19" height="9" rx="4" fill="#f4f4f4" stroke="#bbb" stroke-width=".5"/><text x="33.5" y="41.5" font-family="Liberation Sans" font-weight="bold" font-size="8" text-anchor="middle" fill="#333">DVD</text></svg>
<div class="t" style="left:156px;top:496px;font-size:14px;line-height:14px;transform:scaleX(1.0836);transform-origin:0 0;color:#fff;text-shadow:1px 1px 1px #000,0 0 2px rgba(0,0,0,.6);">Fedora 11 x86_64</div>
<div class="t" style="left:202px;top:513px;font-size:14px;line-height:14px;transform:scaleX(1.0149);transform-origin:0 0;color:#fff;text-shadow:1px 1px 1px #000,0 0 2px rgba(0,0,0,.6);">DVD</div>
<div style="position:absolute;left:361px;top:211px;width:556px;height:576px;background:#c6bebc;border-radius:6px 6px 0 0"></div>
<div style="position:absolute;left:361px;top:211px;width:556px;height:23px;background:linear-gradient(#e2dcda,#d4cdcb 60%,#c8c0be);border-radius:6px 6px 0 0;border-bottom:1px solid #bab2b0"></div>
<svg style="position:absolute;left:373px;top:215px;" width="16" height="15" viewBox="0 0 16 15"><rect x="0.5" y="1.5" width="13" height="9.5" rx="1" fill="#fafafa" stroke="#b8b8b8" stroke-width=".8"/>
<rect x="2" y="3" width="10" height="6.5" fill="#0c1c20" stroke="#3a5a8a" stroke-width=".4"/><rect x="2.5" y="3.3" width="6" height="3" fill="#2f6a64" opacity=".75"/>
<rect x="4" y="11" width="6" height="1.5" fill="#cfcfcf"/><rect x="2.5" y="12.5" width="9" height="2" fill="#dedede"/>
<circle cx="13" cy="2.8" r="2.8" fill="#f4f4f4" stroke="#9aa" stroke-width=".6"/><path d="M12.2 1.4 L14.6 2.8 L12.2 4.2z" fill="#1a8a8a"/></svg>
<div class="t" style="left:514px;top:215px;font-size:14px;line-height:14px;font-weight:bold;transform:scaleX(1.2207);transform-origin:0 0;color:#fcfcfc;text-shadow:0 0 1px rgba(0,0,0,.15);">Virtual Machine Manager</div>
<div style="position:absolute;left:838px;top:212px;width:24px;height:21px;background:linear-gradient(#e4dedc,#cec6c4);border-left:1px solid #ece8e6;border-right:1px solid #c8c0be"></div>
<div style="position:absolute;left:862px;top:212px;width:24px;height:21px;background:linear-gradient(#e4dedc,#cec6c4);border-left:1px solid #ece8e6;border-right:1px solid #c8c0be"></div>
<div style="position:absolute;left:886px;top:212px;width:24px;height:21px;background:linear-gradient(#e4dedc,#cec6c4);border-left:1px solid #ece8e6;border-right:1px solid #c8c0be"></div>
<svg style="position:absolute;left:844px;top:222px;" width="14" height="6" viewBox="0 0 14 6"><rect x="2.5" y="1.5" width="8" height="3" rx="1.4" fill="#ebe7e5"/></svg>
<svg style="position:absolute;left:867px;top:216px;" width="12" height="12" viewBox="0 0 12 12"><path d="M6 2 V10 M2 6 H10" stroke="#ece8e6" stroke-width="2.4" stroke-linecap="round"/></svg>
<svg style="position:absolute;left:891px;top:216px;" width="12" height="12" viewBox="0 0 12 12"><path d="M2.5 2.5 L9.5 9.5 M9.5 2.5 L2.5 9.5" stroke="#ece8e6" stroke-width="2.4" stroke-linecap="round"/></svg>
<div style="position:absolute;left:909px;top:212px;width:5px;height:21px;background:linear-gradient(#dcd6d4,#ccc4c2)"></div>
<div style="position:absolute;left:365px;top:234px;width:548px;height:549px;background:#fff"></div>
<div style="position:absolute;left:365px;top:234px;width:548px;height:25px;background:#edebe9"></div>
<div class="t" style="left:374px;top:239px;font-size:14px;line-height:14px;transform:scaleX(0.9753);transform-origin:0 0;color:#000;">File</div>
<div style="position:absolute;left:373px;top:252px;width:8px;height:1px;background:#000"></div>
<div class="t" style="left:414px;top:239px;font-size:14px;line-height:14px;transform:scaleX(1.1192);transform-origin:0 0;color:#000;">Edit</div>
<div style="position:absolute;left:413px;top:252px;width:8px;height:1px;background:#000"></div>
<div class="t" style="left:458px;top:239px;font-size:14px;line-height:14px;transform:scaleX(1.1299);transform-origin:0 0;color:#000;">View</div>
<div style="position:absolute;left:458px;top:252px;width:9px;height:1px;background:#000"></div>
<div class="t" style="left:508px;top:239px;font-size:14px;line-height:14px;transform:scaleX(1.0767);transform-origin:0 0;color:#000;">Help</div>
<div style="position:absolute;left:508px;top:252px;width:9px;height:1px;background:#000"></div>
<div style="position:absolute;left:365px;top:259px;width:548px;height:63px;background:linear-gradient(#fefefe,#f0efed)"></div>
<div style="position:absolute;left:365px;top:321px;width:548px;height:2px;background:#c8c4c0"></div>
<svg style="position:absolute;left:375px;top:272px;" width="22" height="22" viewBox="0 0 22 22"><rect x="0.5" y="0.5" width="21" height="16" fill="#dedede" stroke="#999"/><rect x="2" y="2" width="18" height="13" fill="#3e4a5e"/><path d="M9 4 L15 8.5 L9 13z" fill="#fff"/><rect x="8" y="17" width="6" height="2" fill="#999"/><rect x="5" y="19" width="12" height="2" fill="#ccc"/></svg>
<div class="t" style="left:374px;top:297px;font-size:14px;line-height:14px;transform:scaleX(1.0058);transform-origin:0 0;color:#000;">Ne</div>
<svg style="position:absolute;left:891px;top:286px;" width="12" height="9" viewBox="0 0 12 9"><path d="M1.5 2 L6 6.5 L10.5 2" fill="none" stroke="#222" stroke-width="1.5"/></svg>
<div style="position:absolute;left:365px;top:323px;width:548px;height:26px;background:linear-gradient(#fdfdfc,#ebe9e7);border-bottom:1px solid #d4d0cc"></div>
<div class="t" style="left:371px;top:329px;font-size:14px;line-height:14px;transform:scaleX(0.9499);transform-origin:0 0;color:#000;">Na</div>
<svg style="position:absolute;left:367px;top:359px;" width="12" height="7" viewBox="0 0 12 7"><path d="M1 1 H11 L6 6z" fill="none" stroke="#222" stroke-width="1.3"/></svg>
<div style="position:absolute;left:386px;top:356px;width:3px;height:11px;background:#222"></div>
<div style="position:absolute;left:365px;top:375px;width:548px;height:43px;background:linear-gradient(#a2a2a2,#8c8c8c)"></div>
<div style="position:absolute;left:386px;top:395px;width:3px;height:20px;background:#777"></div>
<div style="position:absolute;left:890px;top:377px;width:10px;height:39px;background:#eef2f6;border:1px solid #c8d0d8"></div>
<svg style="position:absolute;left:890px;top:380px;" width="10" height="10" viewBox="0 0 10 10"><path d="M0 8 Q5 7 9 5" fill="none" stroke="#5a9ad0" stroke-width="1"/></svg>
<div style="position:absolute;left:364px;top:234px;width:1px;height:549px;background:#aaa4a2"></div>
<div style="position:absolute;left:913px;top:234px;width:1px;height:549px;background:#aaa4a2"></div>
<div style="position:absolute;left:364px;top:783px;width:550px;height:1px;background:#aaa4a2"></div>
<div style="position:absolute;left:389px;top:254px;width:500px;height:518px;background:#0f6aa0;border-radius:7px 7px 0 0"></div>
<div style="position:absolute;left:389px;top:254px;width:500px;height:24px;background:linear-gradient(#0aa0ee,#0b8ad8 40%,#0f72b4 85%,#14608e);border-radius:7px 7px 0 0"></div>
<svg style="position:absolute;left:401px;top:258px;" width="16" height="15" viewBox="0 0 16 15"><rect x="0.5" y="1.5" width="13" height="9.5" rx="1" fill="#fafafa" stroke="#b8b8b8" stroke-width=".8"/>
<rect x="2" y="3" width="10" height="6.5" fill="#0c1c20" stroke="#3a5a8a" stroke-width=".4"/><rect x="2.5" y="3.3" width="6" height="3" fill="#2f6a64" opacity=".75"/>
<rect x="4" y="11" width="6" height="1.5" fill="#cfcfcf"/><rect x="2.5" y="12.5" width="9" height="2" fill="#dedede"/>
<circle cx="13" cy="2.8" r="2.8" fill="#f4f4f4" stroke="#9aa" stroke-width=".6"/><path d="M12.2 1.4 L14.6 2.8 L12.2 4.2z" fill="#1a8a8a"/></svg>
<div class="t" style="left:609px;top:258px;font-size:14px;line-height:14px;font-weight:bold;transform:scaleX(1.1365);transform-origin:0 0;color:#fff;text-shadow:0 1px 1px rgba(0,0,0,.25);">New VM</div>
<div style="position:absolute;left:858px;top:255px;width:24px;height:22px;background:linear-gradient(#28b0f8,#0e88d0 55%,#0c74b4);border-left:1px solid #48c0f8;border-right:1px solid #105d8c"></div>
<svg style="position:absolute;left:864px;top:260px;" width="12" height="12" viewBox="0 0 12 12"><path d="M2.5 2.5 L9.5 9.5 M9.5 2.5 L2.5 9.5" stroke="#a0d4f0" stroke-width="2.6" stroke-linecap="round" opacity=".75"/></svg>
<div style="position:absolute;left:882px;top:255px;width:6px;height:22px;background:linear-gradient(#1898e4,#0f6ea8)"></div>
<div style="position:absolute;left:392px;top:277px;width:494px;height:2px;background:#0c4e78"></div>
<div style="position:absolute;left:392px;top:279px;width:494px;height:59px;background:#0070ab"></div>
<div style="position:absolute;left:392px;top:337px;width:494px;height:2px;background:#0a4a74"></div>
<svg style="position:absolute;left:400px;top:284px;" width="48" height="44" viewBox="0 0 48 44"><defs><radialGradient id="glow"><stop offset="0" stop-color="#ffff60"/><stop offset=".6" stop-color="#e0f040" stop-opacity=".8"/><stop offset="1" stop-color="#c0e000" stop-opacity="0"/></radialGradient></defs><rect x="2" y="7" width="42" height="29" fill="#d6d6d6" stroke="#aaa" stroke-width=".8"/><rect x="4.5" y="9.5" width="37" height="24" fill="#3e4a60"/><path d="M20 14 L30 21.5 L20 29z" fill="#fff"/><rect x="17" y="36" width="11" height="3" fill="#888"/><rect x="12" y="38.5" width="21" height="4" rx="1" fill="#c8c8c8" stroke="#999" stroke-width=".5"/><circle cx="37" cy="10" r="9" fill="url(#glow)"/><path d="M37 4.5 L38.6 8.3 L42.5 8.5 L39.5 11 L40.5 15 L37 12.8 L33.5 15 L34.5 11 L31.5 8.5 L35.4 8.3z" fill="#fff"/></svg>
<div class="t" style="left:457px;top:287px;font-size:16px;line-height:16px;transform:scaleX(1.2066);transform-origin:0 0;color:#eef4f8;">Create a new virtual machine</div>
<div class="t" style="left:457px;top:309px;font-size:15px;line-height:15px;transform:scaleX(1.0751);transform-origin:0 0;color:#5aa8dc;">Step 5 of 5</div>
<div style="position:absolute;left:392px;top:339px;width:494px;height:429px;background:#edebe9"></div>
<div style="position:absolute;left:389px;top:768px;width:500px;height:4px;background:#0f6aa0;border-top:1px solid #f4e8e4"></div>
<div class="t" style="left:408px;top:355px;font-size:14px;line-height:14px;transform:scaleX(1.1570);transform-origin:0 0;color:#000;">Ready to begin installation of</div>
<div class="t" style="left:622px;top:355px;font-size:14px;line-height:14px;font-weight:bold;transform:scaleX(1.1167);transform-origin:0 0;color:#000;">dom</div>
<div class="t" style="left:459px;top:378px;font-size:14px;line-height:14px;transform:scaleX(0.9951);transform-origin:0 0;color:#555;">OS:</div>
<div class="t" style="left:491px;top:378px;font-size:14px;line-height:14px;transform:scaleX(1.1220);transform-origin:0 0;color:#000;">Generic</div>
<div class="t" style="left:437px;top:401px;font-size:14px;line-height:14px;transform:scaleX(1.1369);transform-origin:0 0;color:#555;">Install:</div>
<div class="t" style="left:491px;top:401px;font-size:14px;line-height:14px;transform:scaleX(1.0318);transform-origin:0 0;color:#000;">Local CDROM/ISO</div>
<div class="t" style="left:423px;top:424px;font-size:14px;line-height:14px;transform:scaleX(1.1020);transform-origin:0 0;color:#555;">Memory:</div>
<div class="t" style="left:491px;top:424px;font-size:14px;line-height:14px;transform:scaleX(1.0364);transform-origin:0 0;color:#000;">512 MB</div>
<div class="t" style="left:444px;top:447px;font-size:14px;line-height:14px;transform:scaleX(0.9642);transform-origin:0 0;color:#555;">CPUs:</div>
<div class="t" style="left:491px;top:447px;font-size:14px;line-height:14px;transform:scaleX(1.001);transform-origin:0 0;color:#000;">1</div>
<div class="t" style="left:422px;top:470px;font-size:14px;line-height:14px;transform:scaleX(1.1527);transform-origin:0 0;color:#555;">Storage:</div>
<div class="t" style="left:491px;top:470px;font-size:14px;line-height:14px;transform:scaleX(1.0470);transform-origin:0 0;color:#000;">8.0 Gb</div>
<div class="t" style="left:540px;top:472px;font-size:12px;line-height:12px;transform:scaleX(1.1516);transform-origin:0 0;color:#555;">/var/lib/libvirt/images/dom.img</div>
<svg style="position:absolute;left:410px;top:521px;" width="14" height="9" viewBox="0 0 14 9"><path d="M1 1 H13 L7 8z" fill="none" stroke="#222" stroke-width="1.3"/></svg>
<div class="t" style="left:429px;top:519px;font-size:14px;line-height:14px;transform:scaleX(1.1411);transform-origin:0 0;color:#000;">Advanced options</div>
<div style="position:absolute;left:428px;top:544px;width:417px;height:30px;background:linear-gradient(#f6f8fa,#e4e8ec);border:1px solid #1e6496;border-radius:3px;box-shadow:inset 0 0 0 1px #9cc4e4"></div>
<div class="t" style="left:434px;top:551px;font-size:14px;line-height:14px;transform:scaleX(1.1690);transform-origin:0 0;color:#000;">Virtual network &#x27;default&#x27; (Inactive): NAT to any device</div>
<div style="position:absolute;left:823px;top:549px;width:1px;height:20px;background:#b0b0b0"></div>
<svg style="position:absolute;left:827px;top:554px;" width="10" height="8" viewBox="0 0 10 8"><path d="M1.5 2 L5 5.5 L8.5 2" fill="none" stroke="#333" stroke-width="1.3"/></svg>
<div style="position:absolute;left:430px;top:585px;width:12px;height:12px;background:#d4eaf8;border:1px solid #3a88d8"></div>
<svg style="position:absolute;left:430px;top:585px;" width="12" height="12" viewBox="0 0 12 12"><path d="M3 6 L5.2 9 L9.5 2.5" fill="none" stroke="#1a5ab0" stroke-width="1.7"/></svg>
<div class="t" style="left:448px;top:584px;font-size:14px;line-height:14px;transform:scaleX(1.1253);transform-origin:0 0;color:#000;">Set a fixed mac address</div>
<svg style="position:absolute;left:629px;top:593px;" width="12" height="19" viewBox="0 0 12 19"><path d="M1 1 V15 L4.5 11.5 L7 17 L9 16 L6.5 10.5 H11z" fill="#1a1e2a" stroke="#fff" stroke-width=".8"/></svg>
<div style="position:absolute;left:428px;top:608px;width:158px;height:25px;background:#fff;border:1px solid #a8a4a0;border-radius:2px"></div>
<div class="t" style="left:432px;top:613px;font-size:14px;line-height:14px;transform:scaleX(1.1518);transform-origin:0 0;color:#000;">00:16:36:4a:63:25</div>
<div class="t" style="left:455px;top:649px;font-size:14px;line-height:14px;transform:scaleX(1.1429);transform-origin:0 0;color:#000;">Virt Type:</div>
<div style="position:absolute;left:530px;top:641px;width:131px;height:29px;background:linear-gradient(#fbfbfa,#eeedeb);border:1px solid #a8a4a0;border-radius:3px"></div>
<div class="t" style="left:536px;top:649px;font-size:14px;line-height:14px;transform:scaleX(1.2026);transform-origin:0 0;color:#b0aeac;">xen (fullvirt)</div>
<div style="position:absolute;left:639px;top:645px;width:1px;height:21px;background:#c0bcb8"></div>
<svg style="position:absolute;left:644px;top:652px;" width="10" height="8" viewBox="0 0 10 8"><path d="M1.5 2 L5 5.5 L8.5 2" fill="none" stroke="#333" stroke-width="1.3"/></svg>
<svg style="position:absolute;left:668px;top:645px;" width="20" height="20" viewBox="0 0 20 20"><defs><radialGradient id="inf" cx=".4" cy=".3"><stop offset="0" stop-color="#a8c8f0"/><stop offset="1" stop-color="#4a7ac0"/></radialGradient></defs><circle cx="10" cy="10" r="9" fill="url(#inf)" stroke="#6a90c8" stroke-width=".8"/><circle cx="10" cy="5.5" r="1.5" fill="#fff"/><rect x="8.6" y="8" width="2.8" height="7.5" fill="#fff"/></svg>
<div class="t" style="left:427px;top:686px;font-size:14px;line-height:14px;transform:scaleX(1.2089);transform-origin:0 0;color:#000;">Architecture:</div>
<div style="position:absolute;left:530px;top:678px;width:131px;height:29px;background:linear-gradient(#fbfbfa,#eeedeb);border:1px solid #a8a4a0;border-radius:3px"></div>
<div class="t" style="left:536px;top:686px;font-size:14px;line-height:14px;transform:scaleX(1.0669);transform-origin:0 0;color:#000;">x86_64</div>
<div style="position:absolute;left:639px;top:682px;width:1px;height:21px;background:#c0bcb8"></div>
<svg style="position:absolute;left:644px;top:689px;" width="10" height="8" viewBox="0 0 10 8"><path d="M1.5 2 L5 5.5 L8.5 2" fill="none" stroke="#333" stroke-width="1.3"/></svg>
<div style="position:absolute;left:625px;top:724px;width:82px;height:32px;background:linear-gradient(#fdfdfc,#ebe9e7);border:1px solid #a8a4a0;border-radius:3px"></div>
<svg style="position:absolute;left:630px;top:729px;" width="22" height="22" viewBox="0 0 22 22"><circle cx="11" cy="11" r="10" fill="#e02020" stroke="#901010" stroke-width=".8"/><circle cx="11" cy="8" r="6" fill="#f06060" opacity=".5"/><path d="M7 7 L15 15 M15 7 L7 15" stroke="#fff" stroke-width="2.4"/></svg>
<div class="t" style="left:654px;top:732px;font-size:14px;line-height:14px;transform:scaleX(1.1015);transform-origin:0 0;color:#000;">Cancel</div>
<div style="position:absolute;left:655px;top:746px;width:10px;height:1px;background:#000"></div>
<div style="position:absolute;left:719px;top:724px;width:69px;height:32px;background:linear-gradient(#fdfdfc,#ebe9e7);border:1px solid #a8a4a0;border-radius:3px"></div>
<svg style="position:absolute;left:726px;top:731px;" width="20" height="18" viewBox="0 0 20 18"><path d="M1 9 L9 1.5 V5.5 H19 V12.5 H9 V16.5z" fill="#3a78c8" stroke="#1a4a98" stroke-width=".8"/><path d="M3 9 L9 3.5 V6.5 H18 V9z" fill="#8ab8f0" opacity=".6"/></svg>
<div class="t" style="left:749px;top:732px;font-size:14px;line-height:14px;transform:scaleX(1.0603);transform-origin:0 0;color:#000;">Back</div>
<div style="position:absolute;left:749px;top:746px;width:9px;height:1px;background:#000"></div>
<div style="position:absolute;left:800px;top:724px;width:74px;height:32px;background:linear-gradient(#fdfdfc,#ebe9e7);border:1px solid #a8a4a0;border-radius:3px"></div>
<svg style="position:absolute;left:805px;top:728px;" width="23" height="24" viewBox="0 0 23 24"><rect x="9" y="1" width="12" height="22" fill="#2a5a2a" stroke="#222" stroke-width=".8"/><path d="M9 1 L17 4 V23 L9 21z" fill="#7aa87a" stroke="#333" stroke-width=".6"/><path d="M1 10 H7 V6.5 L13 12 L7 17.5 V14 H1z" fill="#e81818" stroke="#901010" stroke-width=".6"/></svg>
<div class="t" style="left:829px;top:732px;font-size:14px;line-height:14px;transform:scaleX(1.0712);transform-origin:0 0;color:#000;">Finish</div>
<div style="position:absolute;left:829px;top:746px;width:8px;height:1px;background:#000"></div>
<div style="position:absolute;left:0px;top:999px;width:1280px;height:25px;background:linear-gradient(#ffffff 0,#ffffff 4%,#ecebe9 4%,#e9e7e5)"></div>
<svg style="position:absolute;left:1px;top:1001px;" width="22" height="22" viewBox="0 0 22 22"><rect x="0.5" y="0.5" width="21" height="21" rx="4" fill="#f8f8f6" stroke="#a8a4a0"/>
<rect x="5" y="5" width="12" height="12" fill="#d0e8c8" stroke="#707070" stroke-width="1.2"/><rect x="7.5" y="7.5" width="6" height="6" fill="#fff"/>
<path d="M3 3h5v3h-2v2h-3z M19 3h-5v3h2v2h3z M3 19h5v-3h-2v-2h-3z M19 19h-5v-3h2v-2h3z" fill="#5b8ad0" stroke="#2a5aa8" stroke-width=".8"/>
<path d="M9 13 L15 7" stroke="#f0a000" stroke-width="2"/><circle cx="9" cy="13" r="1" fill="#000"/></svg>
<div style="position:absolute;left:28px;top:1005px;width:2px;height:2px;background:#d8d5d2;border-radius:1px"></div>
<div style="position:absolute;left:28px;top:1011px;width:2px;height:2px;background:#d8d5d2;border-radius:1px"></div>
<div style="position:absolute;left:28px;top:1017px;width:2px;height:2px;background:#d8d5d2;border-radius:1px"></div>
<div style="position:absolute;left:35px;top:1001px;width:201px;height:21px;background:linear-gradient(#fbfbfa,#eeedeb);border:1px solid #a8a39e;border-radius:4px"></div>
<svg style="position:absolute;left:41px;top:1003px;" width="18" height="18" viewBox="0 0 18 18"><g opacity=".75"><circle cx="9" cy="9" r="8.5" fill="#f0a050"/><circle cx="10" cy="8" r="5.5" fill="#6aaee0"/><path d="M2 7 C3 3 6 1 9 1 C5 3 4 6 7 8.5 C9 11 12 11 13.5 9.5 C13 13 9 16 6 15 C3 13 1 10 2 7z" fill="#f8c070"/></g></svg>
<div class="t" style="left:66px;top:1004px;font-size:14px;line-height:14px;transform:scaleX(1.0986);transform-origin:0 0;color:#000;">[Setup Libvirt 0.7.0-6 ...</div>
<div style="position:absolute;left:238px;top:1001px;width:201px;height:21px;background:linear-gradient(#fbfbfa,#eeedeb);border:1px solid #a8a39e;border-radius:4px"></div>
<svg style="position:absolute;left:245px;top:1003px;" width="17" height="17" viewBox="0 0 17 17"><rect x="0.5" y="0.5" width="16" height="16" rx="2" fill="#5a5a5a" stroke="#3a3a3a"/>
<rect x="2" y="2" width="13" height="12" fill="#7a7a7a"/><path d="M4 5 L7 7.5 L4 10" fill="none" stroke="#fff" stroke-width="1.2"/>
<rect x="8" y="9.5" width="4" height="1.2" fill="#fff"/><rect x="2.5" y="14" width="2" height="1" fill="#6f6"/></svg>
<div class="t" style="left:269px;top:1004px;font-size:14px;line-height:14px;transform:scaleX(1.0962);transform-origin:0 0;color:#000;">[root@Server1-FC11:~]</div>
<div style="position:absolute;left:442px;top:1001px;width:200px;height:21px;background:linear-gradient(#fbfbfa,#eeedeb);border:1px solid #a8a39e;border-radius:4px"></div>
<svg style="position:absolute;left:448px;top:1003px;" width="17" height="17" viewBox="0 0 17 17"><rect x="0.5" y="0.5" width="16" height="16" rx="2" fill="#5a5a5a" stroke="#3a3a3a"/>
<rect x="2" y="2" width="13" height="12" fill="#2c2c2c"/><path d="M4 5 L7 7.5 L4 10" fill="none" stroke="#fff" stroke-width="1.2"/>
<rect x="8" y="9.5" width="4" height="1.2" fill="#fff"/><rect x="2.5" y="14" width="2" height="1" fill="#6f6"/></svg>
<div class="t" style="left:472px;top:1004px;font-size:14px;line-height:14px;transform:scaleX(1.0784);transform-origin:0 0;color:#000;">root@Server1-FC11:/...</div>
<div style="position:absolute;left:645px;top:1001px;width:200px;height:21px;background:linear-gradient(#fbfbfa,#eeedeb);border:1px solid #a8a39e;border-radius:4px"></div>
<svg style="position:absolute;left:651px;top:1004px;" width="17" height="15" viewBox="0 0 17 15"><path d="M0.5 2 h6 l2 2 h8 v10.5 h-16z" fill="#8ab0e0" stroke="#6a8ab8"/><path d="M4 11 L8.5 7 L13 11" fill="none" stroke="#5a7ab0" stroke-width="1.5"/></svg>
<div class="t" style="left:675px;top:1004px;font-size:14px;line-height:14px;transform:scaleX(1.0856);transform-origin:0 0;color:#000;">[fasiha]</div>
<div style="position:absolute;left:848px;top:1001px;width:201px;height:21px;background:linear-gradient(#d8d4d0,#cfcbc7);border:1px solid #a8a39e;border-radius:4px"></div>
<svg style="position:absolute;left:855px;top:1006px;" width="14" height="13" viewBox="0 0 14 13"><rect x="0.5" y="0.5" width="13" height="12" fill="#fff" stroke="#8a8580"/>
<rect x="1" y="1" width="12" height="2" fill="#5b7fb8"/><rect x="2" y="3.5" width="10" height="8" fill="#e2e2dc"/></svg>
<div class="t" style="left:878px;top:1004px;font-size:14px;line-height:14px;transform:scaleX(1.0542);transform-origin:0 0;color:#000;">TigerVNC: Server1-FC...</div>
<div style="position:absolute;left:1148px;top:1001px;width:105px;height:22px;background:#aaa29f"></div>
<div style="position:absolute;left:1149px;top:1002px;width:26px;height:20px;background:#fff;border:1px solid #222"></div>
<svg style="position:absolute;left:1153px;top:1003px;" width="17" height="17" viewBox="0 0 17 17"><g transform="scale(0.7727272727272727)"><defs><radialGradient id="ffg1153" cx=".62" cy=".3" r=".7"><stop offset="0" stop-color="#9ad8f8"/><stop offset=".5" stop-color="#3a88d8"/><stop offset="1" stop-color="#1a3a98"/></radialGradient>
<linearGradient id="ffo1153" x1="0" y1="0" x2="0" y2="1"><stop offset="0" stop-color="#f8c020"/><stop offset=".5" stop-color="#f07810"/><stop offset="1" stop-color="#c83a08"/></linearGradient></defs>
<circle cx="12.5" cy="10" r="8.8" fill="url(#ffg1153)"/>
<path d="M7 1 C3 3 1 7 1 11.5 C1 17.5 5.5 21.5 11.5 21.5 C17.5 21.5 21.5 17 21.5 11.5 C21.5 10.5 21.3 9.5 21 8.5 C20.5 13 17.5 17.5 12 17.5 C8 17.5 5.2 14.5 5.5 11.5 C5.7 9.5 6.7 8.2 8.3 7.6 C7.5 6.6 7.2 5.5 7.6 4.4 C8.6 5.4 9.6 6 10.8 6.2 C9.8 4.6 8.6 2.8 7 1z" fill="url(#ffo1153)"/>
<path d="M19.5 4.5 C21 6.5 21.5 9 21.2 11.5 C20.8 9.5 20.2 7.5 19.5 4.5z" fill="#f8d040"/></g></svg>
<div style="position:absolute;left:1175px;top:1002px;width:26px;height:20px;background:#1aa8f4"></div>
<svg style="position:absolute;left:1180px;top:1005px;" width="15" height="14" viewBox="0 0 15 14"><rect x="0.5" y="0.5" width="14" height="13" fill="#fff" stroke="#8a8580"/>
<rect x="1" y="1" width="13" height="2" fill="#5b7fb8"/><rect x="2" y="3.5" width="11" height="9" fill="#e2e2dc"/></svg>
<div style="position:absolute;left:1226px;top:1002px;width:1px;height:20px;background:#e8e4e0"></div>
<svg style="position:absolute;left:1257px;top:1003px;" width="21" height="20" viewBox="0 0 21 20"><path d="M1.5 4 Q1.5 1.5 4 1.5 H17 Q19.5 1.5 19.5 4 L18.5 16.5 Q18.3 19 16 19 H5 Q2.7 19 2.5 16.5z" fill="#4a80cc" stroke="#1e4a90"/><path d="M2.5 3.5 Q2.5 2.5 4 2.5 H17 Q18.5 2.5 18.5 3.5 V6 H2.5z" fill="#1e3e78"/><rect x="2.5" y="6" width="16" height="1" fill="#9ac0f0"/></svg>
</body></html>
